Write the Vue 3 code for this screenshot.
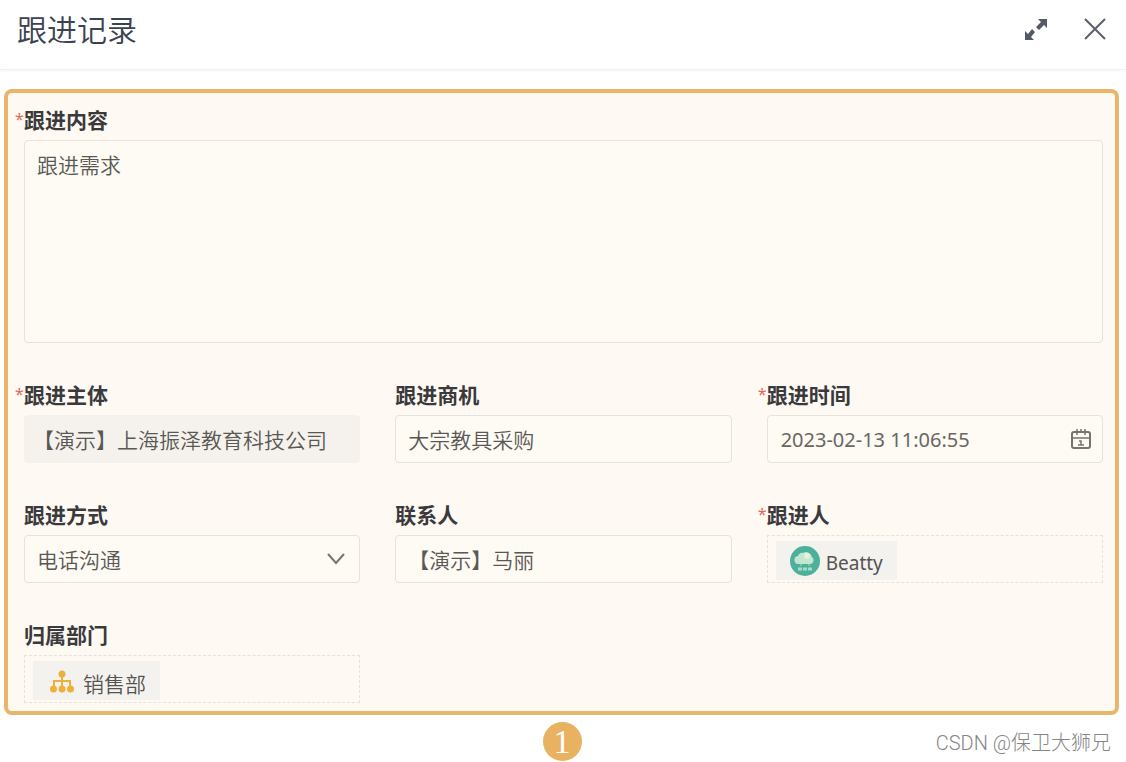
<script setup>
import { ref } from 'vue'

const content = ref('跟进需求')
const subject = ref('【演示】上海振泽教育科技公司')
const opportunity = ref('大宗教具采购')
const time = ref('2023-02-13 11:06:55')
const method = ref('电话沟通')
const contact = ref('【演示】马丽')
</script>

<template>
  <main class="page">
    <header class="header">
      <h1 class="title">跟进记录</h1>
      <div class="actions">
        <button class="icon-btn" type="button" aria-label="全屏">
          <svg width="24" height="24" viewBox="0 0 24 24">
            <path d="M14 2h9v9l-3-3-5 5-3-3 5-5z" fill="#555a66" />
            <path d="M10 23H1v-9l3 3 4-5 3 3-4 5z" fill="#555a66" />
            <path d="M7 8l9 9" stroke="#fff" stroke-width="3" />
          </svg>
        </button>
        <button class="icon-btn" type="button" aria-label="关闭">
          <svg width="24" height="24" viewBox="0 0 24 24">
            <path d="M2 2l20 20M22 2L2 22" stroke="#5a5f69" stroke-width="2" />
          </svg>
        </button>
      </div>
    </header>

    <form class="panel" @submit.prevent>
      <div class="field wide">
        <label class="label" for="content"><span class="mark">*</span>跟进内容</label>
        <textarea id="content" v-model="content" class="control area"></textarea>
      </div>

      <div class="field">
        <label class="label" for="subject"><span class="mark">*</span>跟进主体</label>
        <input id="subject" v-model="subject" class="control filled" type="text" readonly />
      </div>
      <div class="field">
        <label class="label" for="opportunity"><span class="mark"></span>跟进商机</label>
        <input id="opportunity" v-model="opportunity" class="control" type="text" />
      </div>
      <div class="field">
        <label class="label" for="time"><span class="mark">*</span>跟进时间</label>
        <div class="control compound">
          <input id="time" v-model="time" class="bare" type="text" />
          <svg width="20" height="20" viewBox="0 0 20 20" fill="none" stroke="#77746f" stroke-width="2">
            <rect x="1" y="3" width="18" height="16" rx="2" />
            <path d="M1 9h18M6 0v6M10 0v3M14 0v6M8 12h2v4M7 16h6" stroke-width="1.5" />
          </svg>
        </div>
      </div>

      <div class="field">
        <label class="label" for="method"><span class="mark"></span>跟进方式</label>
        <div class="select-wrap">
          <select id="method" v-model="method" class="control">
            <option>电话沟通</option>
          </select>
          <svg class="chevron" width="18" height="12" viewBox="0 0 18 12" fill="none" stroke="#77746f" stroke-width="2">
            <path d="M1 1l8 9 8-9" />
          </svg>
        </div>
      </div>
      <div class="field">
        <label class="label" for="contact"><span class="mark"></span>联系人</label>
        <input id="contact" v-model="contact" class="control" type="text" />
      </div>
      <div class="field" role="group" aria-labelledby="owner">
        <div id="owner" class="label"><span class="mark">*</span>跟进人</div>
        <div class="picker">
          <span class="chip person">
            <svg width="30" height="30" viewBox="0 0 30 30">
              <circle cx="15" cy="15" r="15" fill="#4db09a" />
              <path
                d="M9 18a4 4 0 0 1-1-8 4 4 0 0 1 5-3 6 6 0 0 1 9 4 4 4 0 0 1-1 7z"
                fill="#c3e6d2"
              />
              <circle cx="17" cy="10" r="3" fill="#e3f3d9" />
              <path d="M11 18v2M19 18v2" stroke="#a9dbc9" />
              <path d="M8 23h4M13 23h4M18 23h4" stroke="#a9dbc9" stroke-width="3" />
            </svg>
            Beatty
          </span>
        </div>
      </div>

      <div class="field" role="group" aria-labelledby="dept">
        <div id="dept" class="label"><span class="mark"></span>归属部门</div>
        <div class="picker">
          <span class="chip">
            <svg width="30" height="26" viewBox="-3 0 30 26" fill="#eeb03c">
              <circle cx="12" cy="4" r="3.5" />
              <circle cx="3.5" cy="19" r="3.5" />
              <circle cx="12" cy="19" r="3.5" />
              <circle cx="20.5" cy="19" r="3.5" />
              <path d="M12 4v14M4 18v-7h16v7" fill="none" stroke="#eeb03c" stroke-width="2" />
            </svg>
            销售部
          </span>
        </div>
      </div>
    </form>

    <footer class="footer">
      <span class="badge">1</span>
      <span class="credit">CSDN @保卫大狮兄</span>
    </footer>
  </main>
</template>

<style>
body {
  margin: 0;
  background: #fff;
}
</style>

<style scoped>
.page {
  font-family: "Noto Sans", "Noto Sans CJK SC", sans-serif;
  color: #55534f;
}
.page * {
  box-sizing: border-box;
}
.header {
  display: flex;
  align-items: center;
  justify-content: space-between;
  height: 70px;
  padding: 0 19px 12px 17px;
  border-bottom: 1px solid #f0f0f0;
  box-shadow: 0 1px 3px #f3f3f3;
}
.title {
  margin: 0;
  padding-bottom: 2px;
  font-family: "Noto Sans CJK SC", sans-serif;
  font-size: 30px;
  line-height: 40px;
  font-weight: 350;
  color: #3c4250;
}
.actions {
  display: flex;
  gap: 35px;
}
.icon-btn {
  display: flex;
  padding: 0;
  border: 0;
  background: none;
}
.panel {
  display: grid;
  grid-template-columns: repeat(3, minmax(0, 1fr));
  gap: 37px 35px;
  margin: 19px 7px 0 4px;
  padding: 12px 12px 8px 16px;
  border: 4px solid #e9b569;
  border-radius: 8px;
  background: #fef9f3;
}
.wide {
  grid-column: 1 / -1;
}
.label {
  display: flex;
  margin: 0 0 7px -9px;
  font-family: "Noto Sans CJK SC", sans-serif;
  font-size: 21px;
  line-height: 28px;
  font-weight: 700;
  color: #3a3a3d;
}
.mark {
  flex: none;
  width: 9px;
  font-family: "Noto Sans", sans-serif;
  font-size: 16px;
  font-weight: 400;
  color: #dd6a5c;
}
.control {
  display: block;
  width: 100%;
  height: 48px;
  margin: 0;
  padding: 0 12px;
  border: 1px solid #e6e2dc;
  border-radius: 4px;
  outline: 0;
  background: #fefaf4;
  font-family: "Noto Sans CJK SC", sans-serif;
  font-size: 21px;
  font-weight: 350;
  color: #5a5854;
}
.area {
  height: 203px;
  padding-top: 8px;
  line-height: 30px;
  resize: none;
}
.filled {
  padding: 0 8px;
  border-color: #f5f2ed;
  background: #f5f2ed;
}
.compound {
  display: flex;
  align-items: center;
  padding: 0 11px 0 13px;
}
.bare {
  flex: 1;
  min-width: 0;
  padding: 0;
  border: 0;
  outline: 0;
  background: none;
  font-family: "Noto Sans", sans-serif;
  font-size: 20px;
  color: #6a6763;
}
.select-wrap {
  position: relative;
}
select.control {
  appearance: none;
}
.chevron {
  position: absolute;
  top: 18px;
  right: 15px;
  pointer-events: none;
}
.picker {
  display: flex;
  height: 48px;
  padding: 5px 8px 2px;
  border: 1px dashed #e9e1d6;
}
.chip {
  display: flex;
  align-items: flex-end;
  gap: 6px;
  padding: 0 14px 4px;
  background: #f4f2ef;
  font-family: "Noto Sans CJK SC", sans-serif;
  font-size: 21px;
  line-height: 26px;
  font-weight: 350;
}
.person {
  font-family: "Noto Sans", sans-serif;
  font-size: 19px;
  font-weight: 400;
}
.footer {
  display: grid;
  grid-template-columns: 1fr auto 1fr;
  align-items: center;
  margin: 7px 15px 0 13px;
}
.badge {
  grid-column: 2;
  width: 39px;
  height: 39px;
  border-radius: 50%;
  background: #e9b261;
  font-family: "Liberation Serif", serif;
  font-size: 34px;
  line-height: 39px;
  text-align: center;
  color: #fff;
}
.credit {
  justify-self: end;
  padding-top: 2px;
  font-family: Roboto, "Noto Sans CJK SC", sans-serif;
  font-size: 20px;
  line-height: 28px;
  font-weight: 300;
  color: #858585;
}
</style>
